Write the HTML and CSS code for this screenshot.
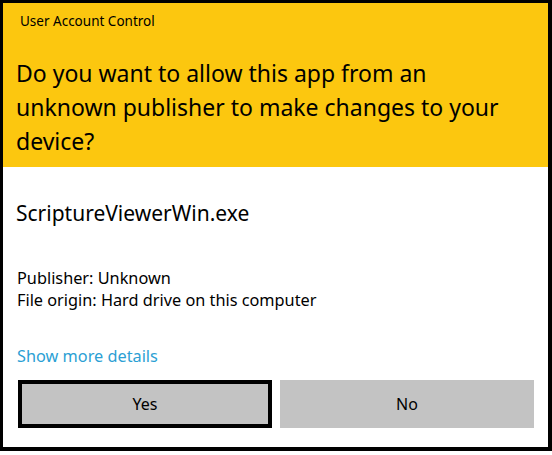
FILE: index.html
```html
<!DOCTYPE html>
<html lang="en">
<head>
    <meta charset="UTF-8">
    <title>User Account Control</title>
    <link rel="stylesheet" href="styles.css">
</head>
<body>
<div class="uac">
    <div class="head">
        <p class="caption">User Account Control</p>
        <p class="question">Do you want to allow this app from an unknown publisher to make changes to your device?</p>
    </div>
    <div class="content">
        <p class="appname">ScriptureViewerWin.exe</p>
        <ul class="info">
            <li>Publisher: Unknown</li>
            <li>File origin: Hard drive on this computer</li>
        </ul>
        <a class="more" href="#">Show more details</a>
        <div class="butbox">
            <button class="yes">Yes</button>
            <button class="no">No</button>
        </div>
    </div>
</div>
</body>
</html>
```

FILE: styles.css
```css
body{
    margin: 0;
    background: #fff;
    font-family: "Noto Sans", "Open Sans", sans-serif;
    color: #000;
}
p{
    margin: 0;
}
.uac{
    width: 552px;
    height: 451px;
    box-sizing: border-box;
    border-style: solid;
    border-color: #000;
    border-width: 3px 4px 4px 3px;
    background: #fff;
}
.head{
    height: 164px;
    box-sizing: border-box;
    background: #fcc70f;
    padding: 9px 24px 0 13px;
}
.caption{
    margin-left: 4px;
    font-size: 13.5px;
    line-height: 18px;
}
.question{
    margin-top: 26px;
    font-size: 23px;
    line-height: 34px;
}
.content{
    padding: 31px 14px 0 13px;
}
.appname{
    font-size: 21px;
    line-height: 30px;
}
.info{
    list-style: none;
    margin: 39px 0 0;
    padding: 0 0 0 1px;
    font-size: 16.3px;
    line-height: 22px;
}
.more{
    display: block;
    margin-top: 34px;
    padding-left: 1px;
    color: #2b9fd4;
    text-decoration: none;
    font-size: 16.3px;
    line-height: 22px;
}
.butbox{
    display: flex;
    gap: 8px;
    margin-top: 13px;
    padding-left: 2px;
}
.butbox button{
    width: 254px;
    height: 48px;
    box-sizing: border-box;
    border: none;
    background: #c3c3c3;
    font-family: inherit;
    font-size: 16px;
    color: #000;
}
.butbox .yes{
    border: 4px solid #000;
}
```
